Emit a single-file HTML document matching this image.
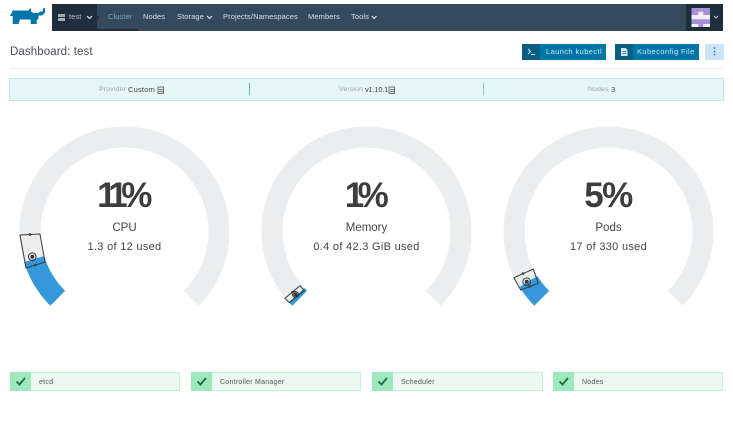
<!DOCTYPE html>
<html><head><meta charset="utf-8">
<style>
html,body{margin:0;padding:0;background:#fff;width:733px;height:421px;overflow:hidden;font-family:"Liberation Sans",sans-serif;color:#3d3d3d}
.a{position:absolute;white-space:nowrap}
.n{top:12px;font-size:7.5px;line-height:10px;color:#d8e0e8;letter-spacing:.1px}
.b{top:44px;height:16px;background:#0075a8;color:#cfe6f0;font-size:7.5px;line-height:16px;letter-spacing:.4px}
.b i{position:absolute;left:0;top:0;width:18px;height:16px;background:#0b5f85}
.c{text-align:center;transform:translateX(-50%)}
.p{top:176px;font-size:35px;line-height:40px;font-weight:bold;color:#3d3d3d;letter-spacing:-1.5px}
.p b{letter-spacing:-6.5px}
.l{top:221px;font-size:11.5px;line-height:14px;color:#444}
.u{top:240px;font-size:11px;line-height:14px;color:#444;letter-spacing:.3px}
.s{top:372px;height:17px;background:#ebf9f2;border:1px solid #c4f1d8;border-left:0}
.s i{position:absolute;left:0;top:-1px;width:21px;height:19px;background:#9ee8bd}
.s span{position:absolute;left:29px;top:4px;font-size:7px;line-height:11px;color:#555;letter-spacing:.25px}
.t{top:85px;font-size:6.8px;line-height:10px;letter-spacing:.2px}
</style></head><body>

<svg class="a" style="left:0;top:0" width="733" height="421" viewBox="0 0 733 421">
<!-- logo -->
<polygon fill="#0075a8" points="10,15.500 11.500,13.500 12.500,10.500 29,10.500 29.500,8.500 31,8.500 31,11.500 33.500,13 39,13 39.500,11.500 42.500,11.500 43.500,8 45,8 45,12.500 42,15.500 38.500,15.500 38.500,19 36.700,20 36.700,24 30.700,24 30.700,19.500 20,19.500 18.500,24 12.700,24 12.700,16 10,16"/>
<!-- navbar -->
<rect x="52" y="4" width="671" height="27" fill="#34495e" rx="1"/>
<rect x="52" y="4" width="45" height="27" fill="#1f2d3d"/>
<polygon points="97,15 100,17.500 97,20" fill="#1f2d3d"/>
<rect x="97" y="29" width="41" height="2" fill="#1f2d3d"/>
<rect x="686" y="4" width="37" height="27" fill="#1f2d3d"/>
<rect x="58" y="14" width="7" height="7" fill="#a3aab2"/>
<rect x="58" y="17" width="7" height="1" fill="#1f2d3d"/>
<polyline points="87,16 89.500,18.500 92,16" fill="none" stroke="#d8e0e8" stroke-width="1.200"/>
<polyline points="207,16 209.500,18.500 212,16" fill="none" stroke="#d8e0e8" stroke-width="1.200"/>
<polyline points="372,16 374,18.500 376.500,16" fill="none" stroke="#d8e0e8" stroke-width="1.200"/>
<polyline points="714,16 716,18 718,16" fill="none" stroke="#b8c2cc" stroke-width="1.100"/>
<!-- avatar -->
<rect x="691.500" y="8" width="18.500" height="19" fill="#a88fdb"/>
<rect x="691.500" y="15" width="18.500" height="4.300" fill="#f0f0f0"/>
<rect x="698.300" y="11.700" width="5" height="3.500" fill="#f0f0f0"/>
<rect x="691.500" y="24" width="6.800" height="3" fill="#f0f0f0"/>
<rect x="703.300" y="24" width="6.700" height="3" fill="#f0f0f0"/>
<!-- hr -->
<rect x="10" y="68" width="713" height="1" fill="#e9eded"/>
<!-- banner -->
<rect x="9.500" y="78.500" width="714" height="22" fill="#e6f5f6" stroke="#c3e5e9"/>
<rect x="249" y="83" width="1" height="12" fill="#6fb5bd"/>
<rect x="483" y="83" width="1" height="12" fill="#8ccdd3"/>
<g fill="none" stroke="#555" stroke-width=".8">
<rect x="158" y="87" width="5.500" height="6.500"/><rect x="389" y="87" width="5.500" height="6.500"/>
<line x1="159" y1="89.500" x2="163" y2="89.500"/><line x1="159" y1="91.500" x2="163" y2="91.500"/>
<line x1="390" y1="89.500" x2="394" y2="89.500"/><line x1="390" y1="91.500" x2="394" y2="91.500"/>
</g>
<!-- gauges -->
<g fill="none" stroke="#ebeeef" stroke-width="21">
<path d="M57.700 298.300A94.500 94.500 0 1 1 191.300 298.300"/>
<path d="M299.700 298.300A94.500 94.500 0 1 1 433.300 298.300"/>
<path d="M541.700 298.300A94.500 94.500 0 1 1 675.300 298.300"/>
</g>
<g fill="none" stroke="#3498db" stroke-width="21">
<path d="M57.700 298.300A94.500 94.500 0 0 1 34.100 259.100"/>
<path d="M299.700 298.300A94.500 94.500 0 0 1 296.600 295.100"/>
<path d="M541.700 298.300A94.500 94.500 0 0 1 528.400 281.500"/>
</g>
<g fill="none" stroke="#3a3a3a" stroke-width="1">
<polygon points="20,235 40,234 45,262 26,268"/>
<circle cx="32.300" cy="256.700" r="3.800"/>
<polygon points="285,298.300 300,285.700 304.300,290.700 289.300,302.700"/>
<circle cx="295.500" cy="294.500" r="3"/>
<polygon points="514,277.700 533.300,269 538.300,283.300 520.700,290"/>
<circle cx="526.700" cy="281.700" r="3.800"/>
</g>
<g fill="#3a3a3a">
<circle cx="32.300" cy="256.700" r="2"/><circle cx="30" cy="234.500" r="1.300"/><circle cx="35.500" cy="265" r="1.300"/>
<circle cx="295.500" cy="294.500" r="2.200"/><circle cx="292.500" cy="292" r="1.200"/><circle cx="297" cy="296.500" r="1.200"/>
<circle cx="526.700" cy="281.700" r="2"/><circle cx="523" cy="273.500" r="1.300"/><circle cx="529.500" cy="286.500" r="1.300"/>
</g>
</svg>

<div class="a n" style="left:69px;color:#b8c2cc">test</div>
<div class="a n" style="left:108px;color:#6fa9b8">Cluster</div>
<div class="a n" style="left:143px">Nodes</div>
<div class="a n" style="left:177px">Storage</div>
<div class="a n" style="left:223px">Projects/Namespaces</div>
<div class="a n" style="left:308px">Members</div>
<div class="a n" style="left:351px">Tools</div>

<div class="a" style="left:10px;top:45px;font-size:11.5px;line-height:14px;color:#4a4f55;letter-spacing:.1px">Dashboard: test</div>

<div class="a b" style="left:522px;width:84px"><i></i><span class="a" style="left:24px;top:0">Launch kubectl</span></div>
<div class="a b" style="left:615px;width:84px"><i></i><span class="a" style="left:22px;top:0">Kubeconfig File</span></div>
<div class="a" style="left:705px;top:44px;width:19px;height:16px;background:#cce4f5;color:#0075a8;font-size:9px;line-height:15px;text-align:center;font-weight:bold">⋮</div>

<div class="a t" style="left:99px;color:#9aa3a8">Provider</div>
<div class="a t" style="left:128px;font-size:7.500px;color:#444">Custom</div>
<div class="a t" style="left:339px;color:#9aa3a8">Version</div>
<div class="a t" style="left:365px;font-size:7.500px;color:#444;letter-spacing:-.2px">v1.10.1</div>
<div class="a t" style="left:588px;color:#9aa3a8">Nodes</div>
<div class="a t" style="left:611px;font-size:7.500px;color:#444">3</div>

<div class="a c p" style="left:124px"><b>1</b><b>1</b>%</div>
<div class="a c l" style="left:124.500px">CPU</div>
<div class="a c u" style="left:124.500px">1.3 of 12 used</div>
<div class="a c p" style="left:366px"><b>1</b>%</div>
<div class="a c l" style="left:366.500px">Memory</div>
<div class="a c u" style="left:366.500px">0.4 of 42.3 GiB used</div>
<div class="a c p" style="left:608px">5%</div>
<div class="a c l" style="left:608.500px">Pods</div>
<div class="a c u" style="left:608.500px">17 of 330 used</div>

<div class="a s" style="left:10px;width:169px"><i></i><span>etcd</span></div>
<div class="a s" style="left:191px;width:169px"><i></i><span>Controller Manager</span></div>
<div class="a s" style="left:372px;width:170px"><i></i><span>Scheduler</span></div>
<div class="a s" style="left:553px;width:169px"><i></i><span>Nodes</span></div>

<svg class="a" style="left:0;top:0;pointer-events:none" width="733" height="421" viewBox="0 0 733 421">
<g fill="none" stroke="#1e6b42" stroke-width="1.800">
<polyline points="16.500,381.500 19.500,384.500 25,378"/>
<polyline points="197.500,381.500 200.500,384.500 206,378"/>
<polyline points="378.500,381.500 381.500,384.500 387,378"/>
<polyline points="559.500,381.500 562.500,384.500 568,378"/>
</g>
<g fill="none" stroke="#cfe6f0" stroke-width="1">
<polyline points="528,49 530.500,51.500 528,54"/>
<line x1="531" y1="54.500" x2="535" y2="54.500"/>
</g>
<path d="M621 48h4.500l2 2v6h-6.500z" fill="#cfe6f0"/>
<path d="M622.500 51.500h3.500M622.500 53.500h3.500" stroke="#0b5f85" stroke-width=".7"/>
</svg>
</body></html>
